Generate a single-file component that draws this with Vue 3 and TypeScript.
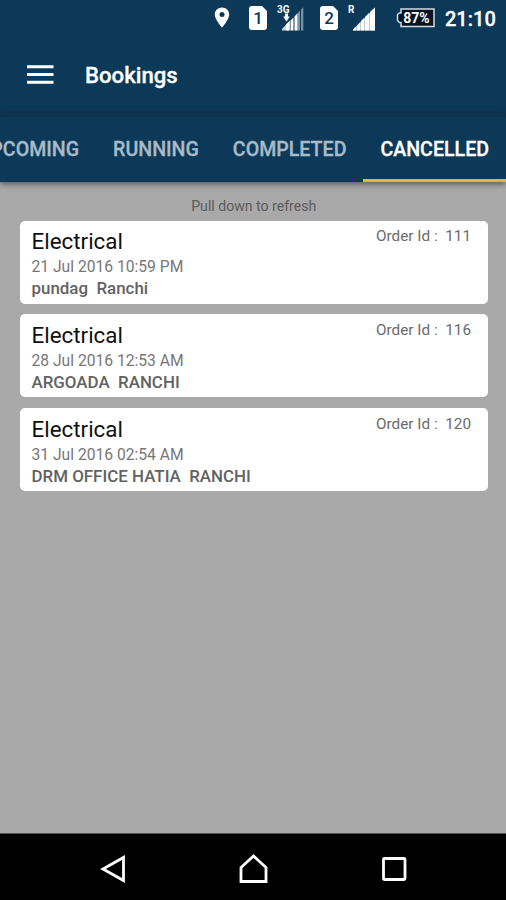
<script setup lang="ts">
interface Booking {
  id: number
  service: string
  date: string
  place: string
}

const tabs: string[] = ['UPCOMING', 'RUNNING', 'COMPLETED', 'CANCELLED']
const active = 'CANCELLED'

const bookings: Booking[] = [
  { id: 111, service: 'Electrical', date: '21 Jul 2016 10:59 PM', place: 'pundag  Ranchi' },
  { id: 116, service: 'Electrical', date: '28 Jul 2016 12:53 AM', place: 'ARGOADA  RANCHI' },
  { id: 120, service: 'Electrical', date: '31 Jul 2016 02:54 AM', place: 'DRM OFFICE HATIA  RANCHI' },
]
</script>

<template>
  <div class="screen">
    <header class="status">
      <svg class="pin" width="16" height="22" viewBox="0 0 16 22">
        <path fill-rule="evenodd" d="M8 .5C4 .5.800 3.500.800 7.500c0 5 7.200 13 7.200 13s7.200-8 7.200-13c0-4-3.200-7-7.200-7zm0 4.500a2.500 2.500 0 1 1 0 5 2.500 2.500 0 0 1 0-5z" />
      </svg>
      <svg class="sim" width="18" height="24" viewBox="0 0 18 24">
        <path d="M3 0h10l5 5v16a3 3 0 0 1-3 3H3a3 3 0 0 1-3-3V3a3 3 0 0 1 3-3z" />
        <text class="sim-no" x="9" y="18" text-anchor="middle">1</text>
      </svg>
      <svg class="signal-a" width="28" height="28" viewBox="0 0 28 28">
        <path opacity=".8" d="M5 26.500v-1.500l8-8.500v10z" />
        <path d="M9 20.500l3-3v9H9zM13.500 16.500l3-3v13h-3zM17.500 12.500l3-3.200v17.200h-3z" />
        <path opacity=".45" d="M20.500 9.300l2.500-2.700v19.900h-2.500zM24 5.500l2.300-2.300v23.300H24z" />
        <path d="M8 9.500h3v3h1.800L9.500 17.500 6.200 12.500H8z" />
        <text class="net" x="0" y="9" textLength="12.500" lengthAdjust="spacingAndGlyphs">3G</text>
      </svg>
      <svg class="sim sim-b" width="18" height="24" viewBox="0 0 18 24">
        <path d="M3 0h10l5 5v16a3 3 0 0 1-3 3H3a3 3 0 0 1-3-3V3a3 3 0 0 1 3-3z" />
        <text class="sim-no" x="9" y="18" text-anchor="middle">2</text>
      </svg>
      <svg class="signal-b" width="28" height="28" viewBox="0 0 28 28">
        <path d="M5 26.500v-1l3-3v4zM9 21.500l3-3v8H9zM13 17l3-3v12.500h-3zM17 13l4-4v17.500h-4zM22 8l5-4.500v23h-5z" />
        <path opacity=".75" d="M5 25.500L27 3.500v23H5z" />
        <text class="net" x="0" y="8.500">R</text>
      </svg>
      <svg class="battery" width="39" height="20" viewBox="0 0 39 20">
        <path class="cell" d="M5 1h33v17.500H5v-4H3.500L1.500 12.500v-6L3.500 5H5z" />
        <text class="charge" x="20.500" y="14.500" text-anchor="middle">87%</text>
      </svg>
      <time>21:10</time>
    </header>

    <div class="toolbar">
      <svg class="burger" width="27" height="20" viewBox="0 0 27 20">
        <path d="M0 .2h26.500v3H0zM0 7.900h26.500v3H0zM0 15.700h26.500v3H0z" />
      </svg>
      <h1>Bookings</h1>
    </div>

    <nav class="tabs">
      <a v-for="tab in tabs" :key="tab" :class="['tab', tab.toLowerCase(), { active: tab === active }]">
        <span>{{ tab }}</span>
      </a>
    </nav>

    <main>
      <p class="hint">Pull down to refresh</p>
      <article v-for="b in bookings" :key="b.id" class="card">
        <div class="details">
          <h2>{{ b.service }}</h2>
          <p class="date">{{ b.date }}</p>
          <p class="place">{{ b.place }}</p>
        </div>
        <p class="order">Order Id :&nbsp; {{ b.id }}</p>
      </article>
    </main>

    <footer>
      <svg width="28" height="30" viewBox="0 0 28 30">
        <path d="M24.500 3.500v23L4 15z" />
      </svg>
      <svg width="30" height="30" viewBox="0 0 30 30">
        <path d="M14.500 2L2 13.500V27.500h25V13.500z" />
      </svg>
      <svg width="26" height="30" viewBox="0 0 26 30">
        <rect x="2.500" y="4.500" width="21.500" height="21" rx="1" />
      </svg>
    </footer>
  </div>
</template>

<style>
body {
  margin: 0;
  overflow: hidden;
}
</style>

<style scoped>
.screen {
  display: flex;
  flex-direction: column;
  width: 506px;
  height: 900px;
  overflow: hidden;
  background: #a9a9a9;
  font-family: Roboto, sans-serif;
}
h1, h2, p { margin: 0; }
.status {
  display: flex;
  align-items: center;
  box-sizing: border-box;
  height: 36px;
  padding-left: 214px;
  background: #0d3959;
  fill: #fff;
}
.status svg { flex: none; }
.sim { margin-left: 18.500px; }
.sim-no { fill: #0d3857; font-size: 17px; font-weight: 500; }
.signal-a { margin-left: 10px; }
.sim.sim-b { margin-left: 15px; }
.signal-b { margin-left: 10px; }
.net { font-size: 10px; font-weight: 700; }
.battery { margin-left: 20px; }
.cell { fill: #081326; stroke: #d5dce2; stroke-width: 1.5; }
.charge { font-size: 14px; font-weight: 700; }
time {
  margin-left: 10.500px;
  color: #fff;
  font-size: 20px;
  font-weight: 500;
  line-height: 36px;
  padding-top: 2px;
  -webkit-text-stroke: 0.3px #fff;
}
.toolbar {
  display: flex;
  align-items: center;
  height: 77px;
  padding-left: 27px;
  background: #0d3959;
}
.burger { fill: #fff; }
h1 {
  margin-left: 31px;
  padding-top: 1px;
  color: #fff;
  font-size: 22.200px;
  font-weight: 500;
  line-height: 30px;
  -webkit-text-stroke: 0.3px #fff;
}
.tabs {
  position: relative;
  z-index: 1;
  display: flex;
  justify-content: flex-end;
  flex: none;
  box-sizing: border-box;
  height: 69px;
  border-top: 4px solid #0c334c;
  background: #0d3959;
  box-shadow: 0 2px 6px rgba(0, 0, 0, 0.5);
}
.tab {
  flex: none;
  box-sizing: border-box;
  padding: 19px 17px 0;
  color: #a9bac8;
  font-size: 19.600px;
  font-weight: 500;
  line-height: 28px;
  -webkit-text-stroke: 0.3px currentColor;
}
.tab.active {
  color: #fff;
  padding-right: 17px;
  border-bottom: 3px solid #e9b826;
}
main {
  flex: 1;
  padding: 14px 18.500px 0 20px;
}
.hint {
  height: 24.500px;
  color: #5b5b5b;
  font-size: 14.100px;
  line-height: 20px;
  text-align: center;
}
.card {
  display: flex;
  justify-content: space-between;
  box-sizing: border-box;
  height: 83px;
  margin-bottom: 10.800px;
  padding: 5.700px 16.500px 0 11.500px;
  border-radius: 5px;
  background: #fff;
}
h2 {
  color: #111;
  font-size: 22.400px;
  font-weight: 400;
  line-height: 30px;
}
.date {
  color: #777;
  font-size: 15.650px;
  line-height: 21px;
}
.place {
  color: #626262;
  font-size: 16.920px;
  font-weight: 500;
  line-height: 22px;
  white-space: pre;
}
.order {
  color: #6b6b6b;
  font-size: 15.300px;
  line-height: 21px;
}
footer {
  display: flex;
  justify-content: space-between;
  box-sizing: border-box;
  height: 67px;
  padding: 20px 99px 0 99px;
  border-top: 1px solid #555;
  background: #000;
}
footer svg {
  fill: none;
  stroke: #fff;
  stroke-width: 2.8;
}
</style>
